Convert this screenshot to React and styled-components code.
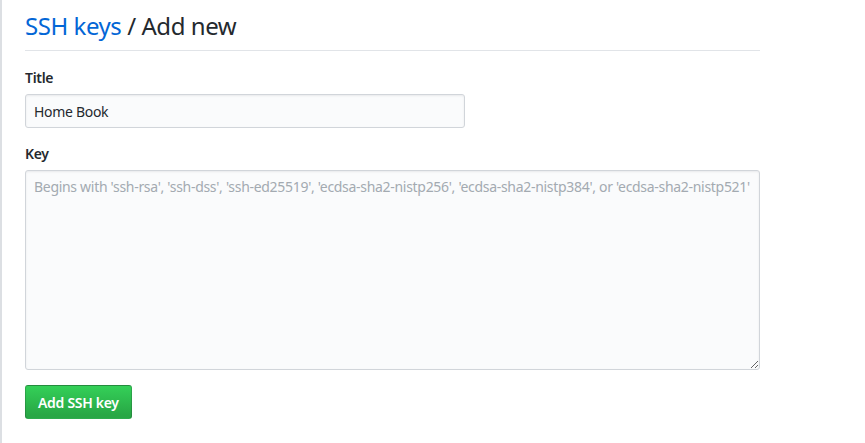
import React from "react";
import styled, { createGlobalStyle } from "styled-components";

const Global = createGlobalStyle`
  html, body { margin: 0; padding: 0; background: #fff; }
  body { font-family: "Segoe UI", "Noto Sans", sans-serif; color: #24292e; font-size: 14px; letter-spacing: -0.3px; }
  * { box-sizing: border-box; }
`;

const Page = styled.div`
  min-height: 443px;
  border-left: 2px solid #dcdfe3;
  padding: 8px 0 0 23px;
`;

const Column = styled.div`
  width: 735px;
`;

const Heading = styled.h2`
  margin: 0;
  font-size: 24px;
  font-weight: 400;
  line-height: 36px;
  letter-spacing: -0.45px;
  padding-bottom: 6px;
  border-bottom: 1px solid #e1e4e8;
  color: #24292e;
`;

const Crumb = styled.a`
  color: #0366d6;
  text-decoration: none;
`;

const Form = styled.form`
  padding-top: 16px;
  display: flex;
  flex-direction: column;
  align-items: flex-start;
`;

const Group = styled.div`
  display: flex;
  flex-direction: column;
  width: ${(p) => p.$width || "100%"};
  margin-bottom: 15px;
`;

const Label = styled.label`
  font-weight: 600;
  font-size: 14px;
  line-height: 21px;
  margin-bottom: 6px;
`;

const fieldStyles = `
  font-family: inherit;
  font-size: 14px;
  letter-spacing: -0.3px;
  color: #24292e;
  background: #fafbfc;
  border: 1px solid #d1d5da;
  border-radius: 3px;
  padding: 6px 8px;
  outline: none;
  box-shadow: inset 0 1px 2px rgba(27,31,35,.075);
  &::placeholder { color: #a3aab1; }
`;

const Input = styled.input`
  ${fieldStyles}
  height: 34px;
  width: 100%;
`;

const TextArea = styled.textarea`
  ${fieldStyles}
  height: 200px;
  width: 100%;
  line-height: 20px;
  padding: 6px 8px;
  resize: vertical;
`;

const Button = styled.button`
  font-family: inherit;
  font-size: 14px;
  font-weight: 600;
  letter-spacing: -0.3px;
  color: #fff;
  height: 34px;
  padding: 0 12px;
  border: 1px solid rgba(27,31,35,.2);
  border-radius: 3px;
  background-image: linear-gradient(-180deg, #34d058 0%, #28a745 90%);
  cursor: pointer;
`;

export default function App() {
  return (
    <>
      <Global />
      <Page>
        <Column>
          <Heading>
            <Crumb href="#">SSH keys</Crumb> / Add new
          </Heading>
          <Form onSubmit={(e) => e.preventDefault()}>
            <Group $width="440px">
              <Label htmlFor="title">Title</Label>
              <Input id="title" defaultValue="Home Book" />
            </Group>
            <Group>
              <Label htmlFor="key">Key</Label>
              <TextArea
                id="key"
                placeholder="Begins with 'ssh-rsa', 'ssh-dss', 'ssh-ed25519', 'ecdsa-sha2-nistp256', 'ecdsa-sha2-nistp384', or 'ecdsa-sha2-nistp521'"
              />
            </Group>
            <Button type="submit">Add SSH key</Button>
          </Form>
        </Column>
      </Page>
    </>
  );
}
